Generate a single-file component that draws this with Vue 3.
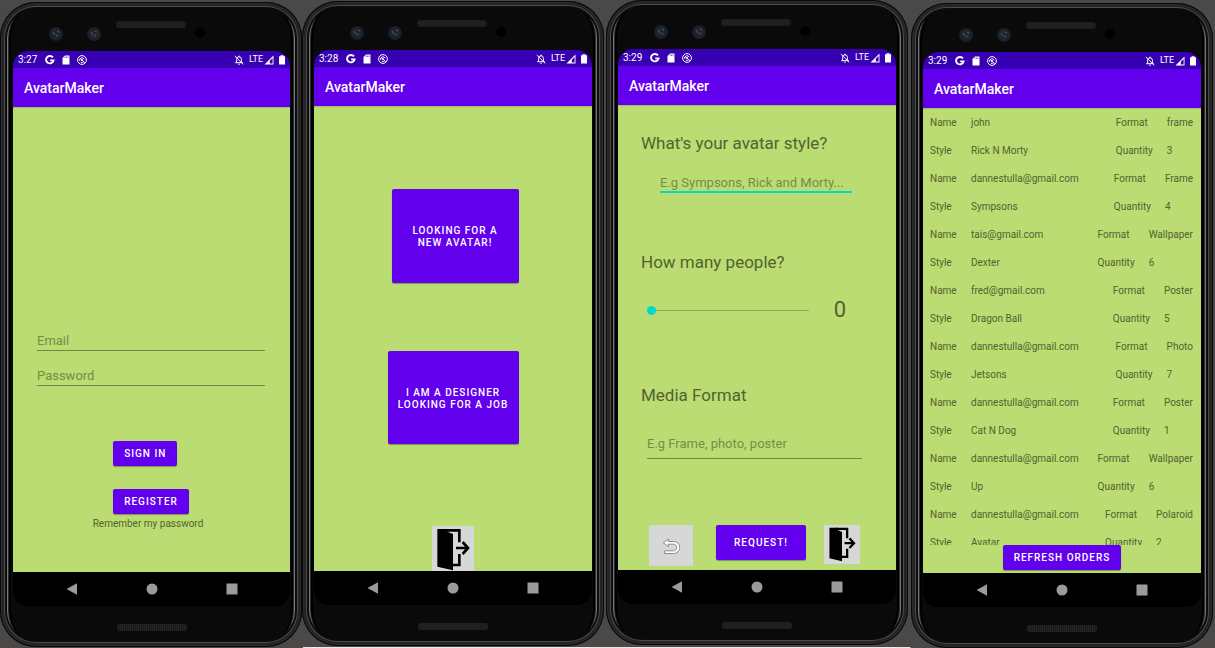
<script setup>
import { ref } from 'vue'

const phones = [
  { id: 'login', time: '3:27' },
  { id: 'role', time: '3:28' },
  { id: 'request', time: '3:29' },
  { id: 'orders', time: '3:29' },
]

const orders = [
  { name: 'john', style: 'Rick N Morty', format: 'frame', quantity: 3 },
  { name: 'dannestulla@gmail.com', style: 'Sympsons', format: 'Frame', quantity: 4 },
  { name: 'tais@gmail.com', style: 'Dexter', format: 'Wallpaper', quantity: 6 },
  { name: 'fred@gmail.com', style: 'Dragon Ball', format: 'Poster', quantity: 5 },
  { name: 'dannestulla@gmail.com', style: 'Jetsons', format: 'Photo', quantity: 7 },
  { name: 'dannestulla@gmail.com', style: 'Cat N Dog', format: 'Poster', quantity: 1 },
  { name: 'dannestulla@gmail.com', style: 'Up', format: 'Wallpaper', quantity: 6 },
  { name: 'dannestulla@gmail.com', style: 'Avatar', format: 'Polaroid', quantity: 2 },
]

const people = ref(0)
</script>

<template>
  <main class="stage">
    <section v-for="phone in phones" :key="phone.id" class="phone" :class="'phone-' + phone.id">
      <svg class="bezel" viewBox="0 0 278 49" aria-hidden="true">
        <g v-for="x in [43, 81]" :key="x">
          <circle :cx="x" cy="32" r="7" fill="#1a2026" />
          <circle :cx="x" cy="32" r="5" fill="#20262d" />
          <path :d="`M${x - 3} 30l2 3M${x + 1} 29l2 1M${x} 34l2-1`" stroke="#59616a" fill="none" />
        </g>
        <rect x="103" y="19" width="70" height="7" rx="3" fill="#1c1c1c" />
        <path d="M105 22.500H171" stroke="#242424" stroke-width="5" stroke-dasharray="1 1" />
        <circle cx="187" cy="31" r="5" fill="#000" />
      </svg>

      <div class="screen">
        <div class="status">
          <span class="time">{{ phone.time }}</span>
          <svg class="ic g" viewBox="0 0 10 10" aria-hidden="true">
            <path d="M7.900 2.400A3.800 3.700 0 1 0 8.600 5.400H5.200" fill="none" stroke="#fff" stroke-width="1.900" />
          </svg>
          <svg class="ic sd" viewBox="0 0 10 10" aria-hidden="true">
            <path d="M4 .500H8.500V9.500H1.500V3Z" fill="#fff" />
            <path d="M4 1.500v1.500M5.500 1.500v1.500M7 1.500v1.500" stroke="#3700b3" stroke-width=".6" />
          </svg>
          <svg class="ic" viewBox="0 0 10 10" aria-hidden="true">
            <circle cx="5" cy="5" r="4.400" fill="none" stroke="#fff" stroke-width="1" />
            <path d="M2.600 5.800A2.500 2.500 0 0 1 7.300 4.200M2.800 3.200L7.800 7.600M3.800 7.200A2.600 2.600 0 0 0 6.600 6.900" fill="none" stroke="#fff" stroke-width="1" />
            <circle cx="5" cy="5" r="1" fill="#fff" />
          </svg>
          <svg class="ic bell" viewBox="0 0 10 10" aria-hidden="true">
            <path d="M2.600 7.500V4.300A2.400 2.500 0 0 1 7.400 4.300V7.500M1.200 7.700H8.800M5 .700V2M4.200 9.200H5.800M.800 1L9.300 9.400" fill="none" stroke="#fff" />
          </svg>
          <span class="lte">LTE</span>
          <svg class="ic" viewBox="0 0 10 10" aria-hidden="true">
            <path d="M.500 9.500L9.500 .500V9.500Z" fill="#fff" />
            <path d="M5.800 5.800L8.600 3V8.600H5.800Z" fill="#3700b3" />
          </svg>
          <svg class="battery" viewBox="0 0 6 10" aria-hidden="true">
            <path d="M0 1.200H1.500V.300H4.500V1.200H6V9.500H0Z" fill="#fff" />
          </svg>
        </div>

        <header class="appbar"><h1>AvatarMaker</h1></header>

        <form v-if="phone.id === 'login'" class="content login" @submit.prevent>
          <input class="field" type="email" placeholder="Email" aria-label="Email" />
          <input class="field" type="password" placeholder="Password" aria-label="Password" />
          <div class="login-actions">
            <button class="btn" type="submit">SIGN IN</button>
            <button class="btn" type="button">REGISTER</button>
          </div>
          <p class="remember">Remember my password</p>
        </form>

        <div v-else-if="phone.id === 'role'" class="content role">
          <div class="role-choices">
            <button class="btn choice client" type="button">LOOKING FOR A<br />NEW AVATAR!</button>
            <button class="btn choice designer" type="button">I AM A DESIGNER<br />LOOKING FOR A JOB</button>
          </div>
          <button class="icon-btn exit-large" type="button" aria-label="Exit">
            <svg viewBox="0 0 126 135" aria-hidden="true">
              <path d="M16 9H46V17L63 24V133L16 122Z" />
              <path d="M40 13H82V49M82 84V117H62M72 66H104M92 48L108 66L92 84" fill="none" stroke="#000" stroke-width="8" />
            </svg>
          </button>
        </div>

        <form v-else-if="phone.id === 'request'" class="content request" @submit.prevent>
          <label class="question" for="style">What's your avatar style?</label>
          <input id="style" class="field style-field" type="text" placeholder="E.g Sympsons, Rick and Morty..." />
          <label class="question people" for="people">How many people?</label>
          <div class="slider-row">
            <input id="people" v-model="people" class="slider" type="range" min="0" max="10" />
            <output for="people">{{ people }}</output>
          </div>
          <label class="question format" for="format">Media Format</label>
          <input id="format" class="field format-field" type="text" placeholder="E.g Frame, photo, poster" />
          <div class="request-actions">
            <button class="icon-btn back" type="button" aria-label="Back">
              <svg viewBox="0 0 132 122" aria-hidden="true">
                <path d="M43 53L58 42V49H74C84 49 92 56 92 66C92 77 84 85 74 85H47V77H73C79 77 83 73 83 67C83 61 79 57 73 57H58V64Z" fill="#fff" stroke="#777" stroke-width="2.500" stroke-linejoin="round" />
              </svg>
            </button>
            <button class="btn send" type="submit">REQUEST!</button>
            <button class="icon-btn exit-small" type="button" aria-label="Exit">
              <svg viewBox="0 0 126 135" aria-hidden="true">
                <path d="M19 9H48V17L63 24V126L19 116Z" />
                <path d="M40 13H81V46M81 82V111H62M72 63H102M89 46L105 63L89 80" fill="none" stroke="#000" stroke-width="8" />
              </svg>
            </button>
          </div>
        </form>

        <div v-else class="content orders">
          <div class="order-list">
            <table v-for="(order, i) in orders" :key="i">
              <tbody>
                <tr>
                  <th class="key" scope="row">Name</th>
                  <td class="main">{{ order.name }}</td>
                  <th class="side" scope="row">Format</th>
                  <td class="value">{{ order.format }}</td>
                </tr>
                <tr>
                  <th class="key" scope="row">Style</th>
                  <td class="main">{{ order.style }}</td>
                  <th class="side" scope="row">Quantity</th>
                  <td class="value">{{ order.quantity }}</td>
                </tr>
              </tbody>
            </table>
          </div>
          <button class="btn refresh" type="button">REFRESH ORDERS</button>
        </div>

        <nav class="navbar" aria-label="System">
          <button type="button" aria-label="Back">
            <svg viewBox="0 0 12 12"><path d="M.500 6L11 .200V11.800Z" /></svg>
          </button>
          <button type="button" aria-label="Home">
            <svg viewBox="0 0 12 12"><circle cx="6" cy="6" r="5.500" /></svg>
          </button>
          <button type="button" aria-label="Overview">
            <svg viewBox="0 0 12 12"><rect x=".5" y=".5" width="11" height="11" rx=".5" /></svg>
          </button>
        </nav>
      </div>

      <div class="chin"><span class="speaker"></span></div>
    </section>
  </main>
</template>

<style>
body {
  margin: 0;
  background: #4b4947;
}
</style>

<style scoped>
.stage {
  box-sizing: border-box;
  min-height: 100vh;
  display: flex;
  padding-right: 2px;
  font-family: Roboto, "Noto Sans", sans-serif;
  background: linear-gradient(#ece8e8, #ece8e8) 303px 100% / 50% 1px no-repeat #4b4947;
}
.phone {
  box-sizing: border-box;
  flex: 1 1 200px;
  min-width: 0;
  display: flex;
  flex-direction: column;
  padding: 0 12px;
  border-radius: 36px;
  background: #0a0a0a;
  box-shadow:
    inset 0 0 0 1px #080808,
    inset 0 0 0 2px #2c2c2c,
    inset 0 0 0 4px #242424,
    inset 0 0 0 5px #4c4c4e,
    inset 0 0 0 7px #0c0c0c,
    inset 8px 0 0 0 #77777a,
    inset -8px 0 0 0 #77777a,
    inset 9px 0 0 0 #2c2c2e,
    inset -9px 0 0 0 #2c2c2e,
    inset 12px 0 0 -1px #000,
    inset -12px 0 0 -1px #000;
}
.phone-login { margin: 2px 0 1px; padding-left: 13px; }
.phone-role { margin: 1px 0 2px; }
.phone-request { margin: 0 0 3px 2px; }
.phone-orders { margin: 3px 0 0 3px; }
.bezel {
  display: block;
  flex: none;
  align-self: center;
  width: 278px;
  height: 49px;
}
.screen {
  flex: 1;
  display: flex;
  flex-direction: column;
  overflow: hidden;
  border-radius: 15px;
  background: #000;
}
.status {
  flex: none;
  box-sizing: border-box;
  height: 17px;
  display: flex;
  align-items: center;
  padding: 0 5px;
  background: #3700b3;
  color: #fff;
  font-size: 10px;
  line-height: 17px;
}
.time { width: 27px; }
.ic { width: 10px; height: 10px; flex: none; }
.sd { margin: 0 6px; }
.bell { margin-left: auto; }
.lte { margin: 0 1px 0 5px; font-size: 9px; }
.battery { width: 6px; height: 10px; margin-left: 5px; }
.appbar {
  flex: none;
  height: 39px;
  display: flex;
  align-items: center;
  padding: 0 11px;
  background: #6200ee;
  color: #fff;
}
.appbar h1 {
  margin: 0;
  font-size: 14px;
  line-height: 18px;
  font-weight: 500;
}
.content {
  flex: 1;
  min-height: 0;
  display: flex;
  flex-direction: column;
  background: #badc72;
  color: #53622f;
  box-shadow: inset 0 1px 1px #9fbd60;
}
.btn {
  box-sizing: border-box;
  height: 25px;
  padding: 0 11px;
  border: 0;
  border-radius: 2px;
  background: #6200ee;
  box-shadow: 0 1px 1px #7c964b;
  color: #fff;
  font: 500 10px/12px Roboto, "Noto Sans", sans-serif;
  letter-spacing: 1px;
  text-align: center;
}
.field {
  box-sizing: border-box;
  height: 21px;
  min-width: 0;
  padding: 0;
  border: 0;
  border-bottom: 1px solid #71864a;
  border-radius: 0;
  outline: 0;
  background: transparent;
  color: #3f4b23;
  font: 13px/18px Roboto, "Noto Sans", sans-serif;
}
.field::placeholder { color: #768d48; opacity: 1; }

.login { padding: 223px 25px 0 24px; }
.login .field + .field { margin-top: 14px; }
.login-actions {
  align-self: center;
  display: flex;
  flex-direction: column;
  align-items: flex-start;
  gap: 23px;
  margin-top: 55px;
}
.remember {
  align-self: center;
  margin: 3px 0 0;
  padding-right: 6px;
  font-size: 10px;
  line-height: 13px;
}

.role { align-items: center; }
.role-choices {
  display: flex;
  flex-direction: column;
  align-items: flex-end;
  gap: 68px;
  margin-top: 83px;
}
.choice { height: 94px; padding: 2px 0 0; }
.client { width: 127px; }
.designer { width: 131px; height: 93px; }
.icon-btn {
  padding: 0;
  border: 0;
  border-radius: 1px;
  background: #d6d7d7;
}
.icon-btn svg { display: block; width: 100%; height: 100%; }
.exit-large { width: 42px; height: 45px; margin-top: auto; }

.question {
  margin: 28px 23px 0;
  font-size: 17px;
  line-height: 20px;
}
.question.people { margin-top: 59px; }
.question.format { margin-top: 62px; }
.style-field {
  height: 24px;
  margin: 16px 44px 0 42px;
  padding-top: 4px;
  border-bottom: 2px solid #03dac5;
}
.format-field { height: 30px; margin: 24px 34px 0 29px; }
.slider-row {
  display: flex;
  align-items: center;
  gap: 25px;
  height: 26px;
  margin: 25px 50px 0 29px;
}
.slider-row output { font-size: 22px; line-height: 26px; }
.slider {
  appearance: none;
  flex: 1;
  min-width: 0;
  height: 9px;
  margin: 0;
  background: linear-gradient(#91ac59, #91ac59) 5px 50% / 100% 1px no-repeat;
}
.slider::-webkit-slider-thumb {
  appearance: none;
  width: 9px;
  height: 9px;
  border-radius: 50%;
  background: #03dac5;
}
.request-actions {
  display: flex;
  align-items: flex-start;
  margin: auto 36px 4px 31px;
}
.back { width: 44px; height: 41px; }
.send { flex: 1; height: 35px; margin: 0 18px 0 23px; }
.exit-small { width: 36px; height: 39px; }

.order-list {
  box-sizing: border-box;
  flex: 1 1 auto;
  height: 0;
  min-height: 0;
  padding: 1px 8px 0 7px;
  overflow: auto;
  scrollbar-width: none;
}
table {
  width: 100%;
  border-collapse: collapse;
  font-size: 10px;
  line-height: 14px;
}
th, td {
  height: 28px;
  padding: 0;
  font-weight: 400;
  text-align: left;
  white-space: nowrap;
}
.key { width: 41px; }
.side { width: 1px; padding-right: 14px; }
.value { width: 1px; }
.refresh { align-self: center; flex: none; margin-bottom: 3px; }

.navbar {
  flex: none;
  height: 34px;
  display: flex;
  align-items: center;
  justify-content: center;
  gap: 68px;
  background: #000;
}
.navbar button {
  width: 12px;
  height: 12px;
  padding: 0;
  border: 0;
  background: none;
}
.navbar svg { display: block; fill: #9b9b9b; }
.chin {
  flex: none;
  height: 41px;
  display: flex;
  align-items: center;
  justify-content: center;
}
.speaker {
  width: 70px;
  height: 7px;
  margin-top: 2px;
  border-radius: 3px;
  background: repeating-linear-gradient(90deg, #1b1b1b 0 1px, #242424 1px 2px);
}
</style>
